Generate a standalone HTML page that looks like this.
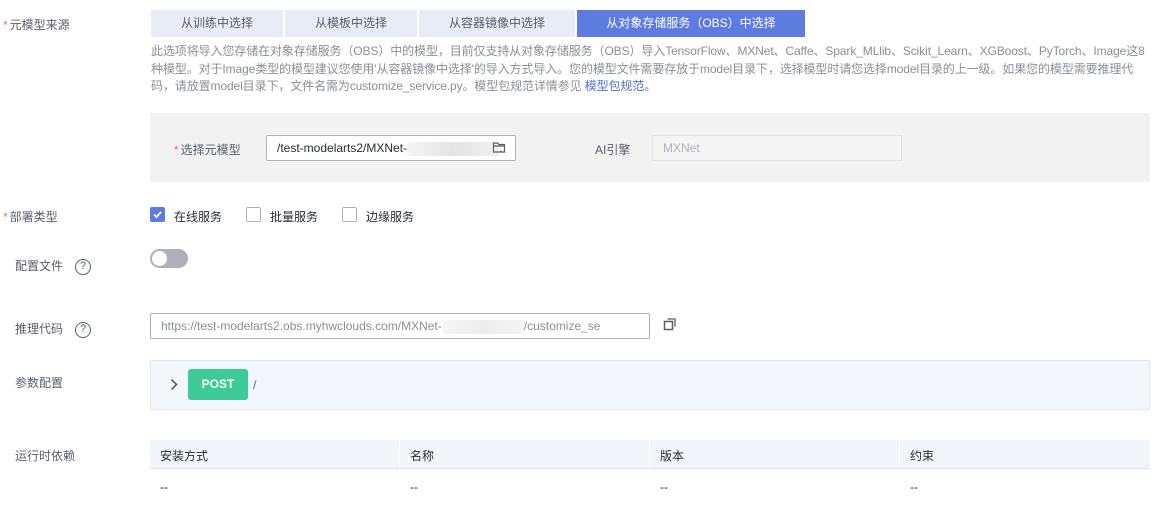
<!DOCTYPE html>
<html><head><meta charset="utf-8"><style>
*{box-sizing:border-box;margin:0;padding:0}
body{width:1155px;height:511px;background:#fff;position:relative;overflow:hidden;font-family:"Liberation Sans","Noto Sans CJK SC",sans-serif;font-size:12px;color:#252b3a}
.a{position:absolute;white-space:nowrap}
.lbl{color:#575d6c}
.star{color:#f66f6a;margin-right:2px}
.tab{position:absolute;top:10px;height:27px;line-height:27px;text-align:center;background:#e8ecf6;color:#575d6c;font-size:12px}
.desc{position:absolute;left:151px;top:43px;width:1004px;color:#8a8e99;line-height:17.5px;font-size:12px;white-space:nowrap;letter-spacing:-0.1px}
.inp{position:absolute;border:1px solid #adb0b8;background:#fff;height:26px;line-height:24px;padding-left:10px;border-radius:2px}
.q{display:inline-block;width:16px;height:16px;border:1.5px solid #575d6c;border-radius:50%;text-align:center;line-height:13px;font-size:11px;margin-left:12px;vertical-align:middle}
.cb{position:absolute;top:207px;width:15px;height:15px;border:1px solid #adb0b8;border-radius:2px;background:#fff}
</style></head><body>
<div class="a lbl" style="left:3px;top:16px"><span class="star">*</span>元模型来源</div>
<div class="tab" style="left:151px;width:132px">从训练中选择</div>
<div class="tab" style="left:285px;width:132px">从模板中选择</div>
<div class="tab" style="left:419px;width:156px">从容器镜像中选择</div>
<div class="tab" style="left:577px;width:228px;background:#5e7ce0;color:#fff">从对象存储服务（OBS）中选择</div>
<div class="desc">此选项将导入您存储在对象存储服务（OBS）中的模型，目前仅支持从对象存储服务（OBS）导入TensorFlow、MXNet、Caffe、Spark_MLlib、Scikit_Learn、XGBoost、PyTorch、Image这8<br>种模型。对于Image类型的模型建议您使用'从容器镜像中选择'的导入方式导入。您的模型文件需要存放于model目录下，选择模型时请您选择model目录的上一级。如果您的模型需要推理代<br>码，请放置model目录下，文件名需为customize_service.py。模型包规范详情参见 <span style="color:#526ecc">模型包规范。</span></div>

<div class="a" style="left:150px;top:113px;width:1000px;height:69px;background:#f2f2f2"></div>
<div class="a lbl" style="left:174px;top:141px"><span class="star">*</span>选择元模型</div>
<div class="inp" style="left:266px;top:135px;width:250px;color:#252b3a">/test-modelarts2/MXNet-<span style="display:inline-block;width:92px;height:14px;vertical-align:middle;background:linear-gradient(90deg,#f5f5f5,#e4e4e6,#f0f0f0)"></span>:
<svg style="position:absolute;right:9px;top:5px" width="14" height="13" viewBox="0 0 14 13"><path d="M1.5 2h4l1.5 1.5h5.5v7.5h-11z M1.5 5h11" fill="none" stroke="#575d6c" stroke-width="1.2"/></svg></div>
<div class="a lbl" style="left:595px;top:141px">AI引擎</div>
<div class="inp" style="left:652px;top:135px;width:250px;border-color:#dfe1e6;background:#f5f5f6;color:#adb0b8">MXNet</div>

<div class="a lbl" style="left:3px;top:208px"><span class="star">*</span>部署类型</div>
<div class="cb" style="left:150px;background:#5e7ce0;border-color:#5e7ce0"><svg width="13" height="13" viewBox="0 0 13 13"><path d="M3 6.5l2.5 2.5 4.5-5" fill="none" stroke="#fff" stroke-width="1.8"/></svg></div>
<div class="a" style="left:174px;top:208px">在线服务</div>
<div class="cb" style="left:246px"></div>
<div class="a" style="left:270px;top:208px">批量服务</div>
<div class="cb" style="left:342px"></div>
<div class="a" style="left:366px;top:208px">边缘服务</div>

<div class="a lbl" style="left:15px;top:257px">配置文件<span class="q">?</span></div>
<div class="a" style="left:150px;top:249px;width:38px;height:19px;border-radius:10px;background:#adb0b8"><div style="position:absolute;left:2px;top:2px;width:15px;height:15px;border-radius:50%;background:#fff"></div></div>

<div class="a lbl" style="left:15px;top:320px">推理代码<span class="q">?</span></div>
<div class="inp" style="left:150px;top:313px;width:500px;color:#8a8e99">https://test-modelarts2.obs.myhwclouds.com/MXNet-<span style="display:inline-block;width:82px;height:14px;vertical-align:middle;background:linear-gradient(90deg,#f7f7f7,#ececee,#f5f5f5)"></span>/customize_se</div>
<svg class="a" style="left:663px;top:317px" width="14" height="14" viewBox="0 0 14 14"><rect x="1.5" y="4.5" width="8" height="8" fill="none" stroke="#575d6c" stroke-width="1.5"/><path d="M4.5 2h7.5v7.5" fill="none" stroke="#575d6c" stroke-width="1.3"/></svg>

<div class="a lbl" style="left:15px;top:374px">参数配置</div>
<div class="a" style="left:150px;top:360px;width:1000px;height:50px;background:#f3f6fb;border:1px solid #e3e6ec"></div>
<svg class="a" style="left:170px;top:378px" width="8" height="13" viewBox="0 0 8 13"><path d="M1.5 1.5l5 5-5 5" fill="none" stroke="#575d6c" stroke-width="1.6"/></svg>
<div class="a" style="left:188px;top:369px;width:60px;height:31px;background:#3dcb98;border-radius:3px;color:#fff;font-weight:bold;text-align:center;line-height:31px;font-size:12px">POST</div>
<div class="a" style="left:253px;top:378px;color:#575d6c">/</div>

<div class="a lbl" style="left:15px;top:447px">运行时依赖</div>
<div class="a" style="left:150px;top:440px;width:1000px;height:29px;background:#f2f5fa;border-bottom:1px solid #dfe1e6"></div>
<div class="a" style="left:399px;top:441px;width:1px;height:27px;background:#fff"></div>
<div class="a" style="left:649px;top:441px;width:1px;height:27px;background:#fff"></div>
<div class="a" style="left:899px;top:441px;width:1px;height:27px;background:#fff"></div>
<div class="a" style="left:160px;top:447px">安装方式</div>
<div class="a" style="left:410px;top:447px">名称</div>
<div class="a" style="left:660px;top:447px">版本</div>
<div class="a" style="left:910px;top:447px">约束</div>
<div class="a" style="left:160px;top:480px">--</div>
<div class="a" style="left:410px;top:480px">--</div>
<div class="a" style="left:660px;top:480px">--</div>
<div class="a" style="left:910px;top:480px">--</div>
</body></html>
